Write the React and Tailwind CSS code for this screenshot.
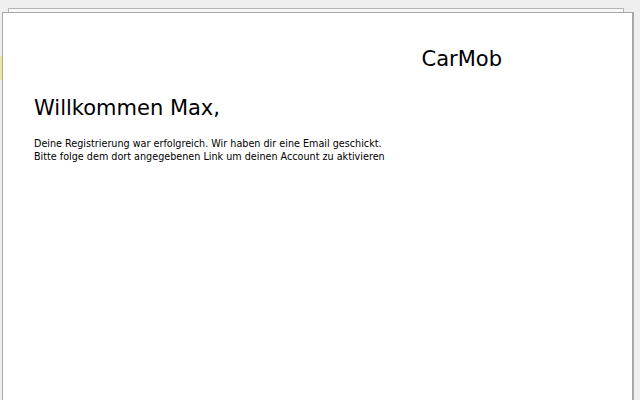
export default function App() {
  return (
    <div className="h-[400px] w-[640px] overflow-hidden bg-[#efefef] pt-[12px] pl-[2px] relative" style={{ fontFamily: '"Comic Sans MS", "DejaVu Sans", sans-serif' }}>
      {/* paper behind */}
      <div className="absolute left-[8px] top-[8px] w-[616px] h-[20px] border border-[#b5b5b5] bg-[#f7f7f7]" />
      {/* yellow smudge */}
      <div className="absolute left-0 top-[56px] w-[3px] h-[24px] bg-[#e9e8a6]" />

      <div className="relative w-[632px] h-[400px] bg-white border border-[#a9a9a9] border-r-2">
        <div className="flex justify-end pr-[130px] pt-[31px]">
          <span className="text-[21px] text-black">CarMob</span>
        </div>
        <div className="pl-[31px] pt-[18px]">
          <h1 className="text-[21px] text-black leading-[28px]">Willkommen Max,</h1>
          <div className="mt-[15px] text-[9.65px] leading-[13px] text-black">
            <p>Deine Registrierung war erfolgreich. Wir haben dir eine Email geschickt.</p>
            <p>Bitte folge dem dort angegebenen Link um deinen Account zu aktivieren</p>
          </div>
        </div>
      </div>
    </div>
  );
}
